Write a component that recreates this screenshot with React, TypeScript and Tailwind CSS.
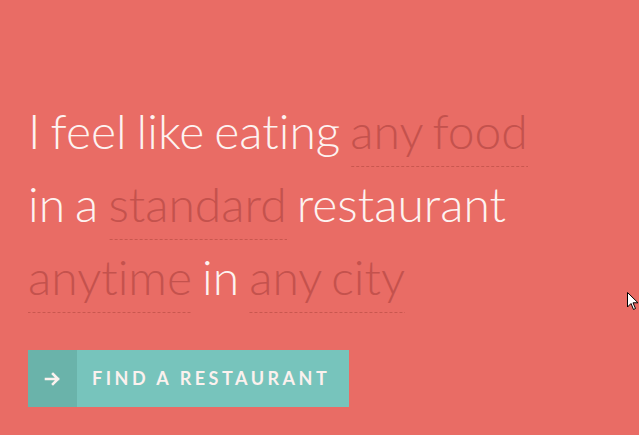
import React from "react";

const Pick = ({ children }: { children: React.ReactNode }) => (
  <span className="text-[#c4524d] pb-[8px] bg-[linear-gradient(to_right,#c9574f_60%,transparent_60%)] bg-[length:5px_1px] bg-repeat-x bg-bottom">
    {children}
  </span>
);

export default function App() {
  return (
    <div className="relative w-[639px] h-[435px] overflow-hidden bg-[#e96c65] font-['Lato',sans-serif] [font-variant-ligatures:none]">
      <div className="pt-[94px] pl-[28px]">
        <div className="text-[48px] leading-[73px] font-light text-[#fdf3f1] [word-spacing:-3px]">
          <div>
            I feel like eating <Pick>any food</Pick>
          </div>
          <div>
            in a <Pick>standard</Pick> restaurant
          </div>
          <div>
            <Pick>anytime</Pick> in <Pick>any city</Pick>
          </div>
        </div>
        <button className="mt-[37px] flex h-[57px] w-[321px] bg-[#77c4bc] text-[#fbf1ee]">
          <span className="flex w-[49px] h-full items-center justify-center bg-[#6ab3aa]">
            <svg width="17" height="14" viewBox="0 0 17 14" fill="none" stroke="currentColor" strokeWidth="2.6" strokeLinecap="square">
              <path d="M2 7h12M9 2l5 5-5 5" />
            </svg>
          </span>
          <span className="flex flex-1 items-center pl-[15px] text-[18px] font-bold tracking-[3.5px] whitespace-nowrap">
            FIND A RESTAURANT
          </span>
        </button>
      </div>
      <svg className="absolute left-[627px] top-[292px]" width="12" height="19" viewBox="0 0 12 19">
        <path d="M0.5 0.5 L0.5 15 L4 11.5 L6.5 17.5 L8.5 16.5 L6 10.8 L11 10.8 Z" fill="#fff" stroke="#000" strokeWidth="1" />
      </svg>
    </div>
  );
}
